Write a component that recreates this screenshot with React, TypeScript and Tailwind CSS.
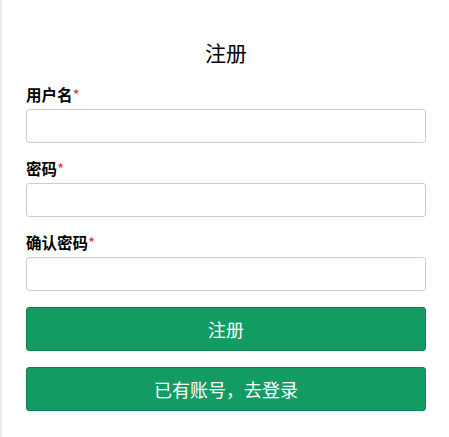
const fields = ["用户名", "密码", "确认密码"];

const App = () => {
  return (
    <div
      className="min-h-[437px] bg-white border-l-2 border-[#ebebeb] text-black"
      style={{ fontFamily: '"Noto Sans CJK SC", "Noto Sans", sans-serif' }}
    >
      <div className="w-[400px] ml-[24px] pt-[38px]">
        <h1 className="text-center text-[21px] leading-[28px] font-normal mb-[18px]">
          注册
        </h1>
        {fields.map((label, index) => (
          <div key={index} className="mb-[15px]">
            <label className="block text-[15.5px] leading-[20px] font-bold mb-[5px]">
              {label}
              <span className="text-[#e4393c] font-normal">*</span>
            </label>
            <input
              type={index === 0 ? "text" : "password"}
              className="block w-full h-[34px] border border-[#ccc] rounded-[3px] px-3 outline-none"
            />
          </div>
        ))}
        <button className="block w-full h-[44px] mt-[16px] bg-[#139b64] border border-[#0d7f50] rounded-[3px] text-white text-[18px]">
          注册
        </button>
        <button className="block w-full h-[44px] mt-[16px] bg-[#139b64] border border-[#0d7f50] rounded-[3px] text-white text-[18px]">
          已有账号，去登录
        </button>
      </div>
    </div>
  );
};

export default App;
